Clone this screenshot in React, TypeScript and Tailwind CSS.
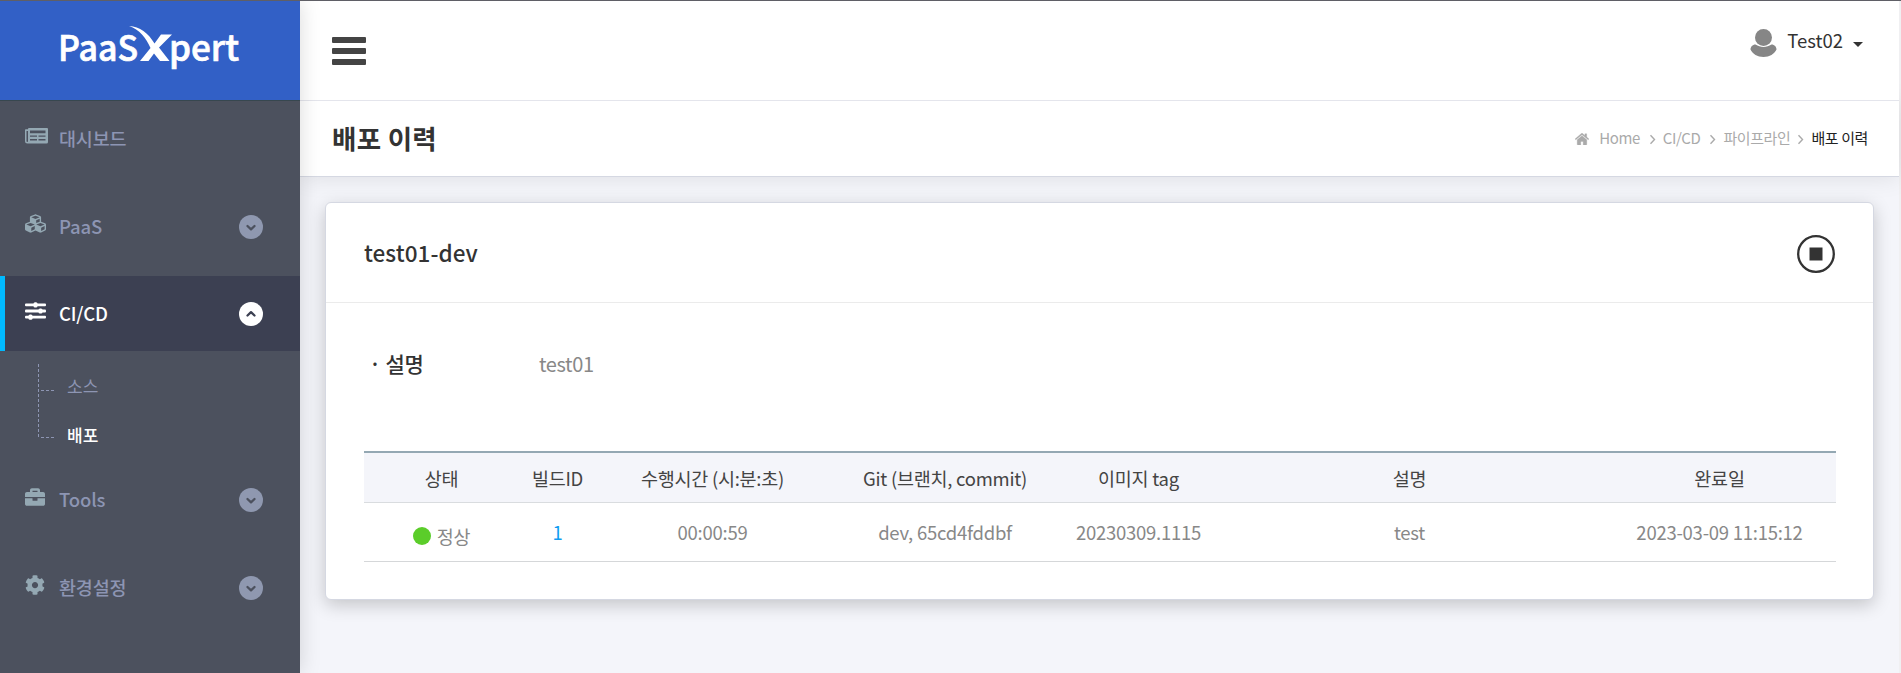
import React from "react";
import { FaCubes, FaBriefcase, FaCog } from "react-icons/fa";

function CircleArrow({ up = false }: { up?: boolean }) {
  return (
    <svg width="24" height="24" viewBox="0 0 24 24" className={up ? "text-white" : "text-[#8f98b0]"}>
      <circle cx="12" cy="12" r="12" fill="currentColor" />
      <path
        d={up ? "M8.500 13.500 12 10.200l3.500 3.300" : "M8.500 11l3.500 3.300 3.500-3.300"}
        fill="none"
        stroke={up ? "#3c4052" : "#4c515e"}
        strokeWidth="2.3"
        strokeLinecap="round"
        strokeLinejoin="round"
      />
    </svg>
  );
}

function NewsIcon() {
  return (
    <svg width="23" height="16" viewBox="0 0 23 16">
      <path
        fill="currentColor"
        fillRule="evenodd"
        d="M4 0h18q1 0 1 1v13q0 1.500-1.500 1.500H2.500Q0 15.500 0 13V2q0-.8.8-.8H3V1q0-1 1-1zM1.500 3v10q0 1 .8 1t.7-1V3zM5 2.500v2.800h15.500V2.500zM5 7.400v1.300h7V7.400zM13.500 7.400v1.300h7V7.400zM5 11v1.400h7V11zM13.500 11v1.400h7V11z"
      />
    </svg>
  );
}

function SlidersIcon() {
  return (
    <svg width="22" height="18" viewBox="0 0 22 18" fill="currentColor">
      <rect x="0" y="1.500" width="21" height="2.800" rx="1" />
      <rect x="0" y="7.600" width="21" height="2.800" rx="1" />
      <rect x="0" y="13.700" width="21" height="2.800" rx="1" />
      <rect x="8.500" y="0.300" width="4" height="5.200" rx="1.500" />
      <rect x="13.500" y="6.400" width="4" height="5.200" rx="1.500" />
      <rect x="3.500" y="12.500" width="4" height="5.200" rx="1.500" />
    </svg>
  );
}

function Separator({ className }: { className: string }) {
  return (
    <svg width="12" height="12" viewBox="0 0 12 12" className={className}>
      <path d="M3.500 2.300 7.500 6.500l-4 4.200" fill="none" stroke="#aaa" strokeWidth="1.400" />
    </svg>
  );
}

function MenuItem({
  icon,
  label,
  arrow,
  active = false,
}: {
  icon: React.ReactNode;
  label: string;
  arrow?: "up" | "down";
  active?: boolean;
}) {
  return (
    <div
      className={
        active
          ? "flex h-[75px] items-center border-l-5 border-[#00baff] bg-[#3c4052] pr-[37px] pl-5 text-white"
          : "flex h-[75px] items-center pr-[37px] pl-[25px] text-[#8d95b3]"
      }
    >
      <span className={active ? "mb-[6px] w-[34px] text-white" : "mb-[6px] w-[34px] text-[#94a8b3]"}>{icon}</span>
      <span className="mb-[2px] flex-1 text-[18.5px] leading-6 font-medium tracking-[-0.15px]">{label}</span>
      {arrow && <CircleArrow up={arrow === "up"} />}
    </div>
  );
}

function Logo() {
  return (
    <svg width="300" height="99" viewBox="0 0 300 99" fill="#fff">
      <g fontFamily="Noto Sans CJK KR" fontSize="35.500" fontWeight="500" stroke="#fff" strokeWidth="0.700">
        <text x="58" y="59.700" textLength="80" lengthAdjust="spacingAndGlyphs">
          PaaS
        </text>
        <text x="169" y="59.700" textLength="70" lengthAdjust="spacingAndGlyphs">
          pert
        </text>
      </g>
      <path d="M129 25c11 1 19 6.500 25.500 17.500l6.500-9h11L159 46.500l10.500 13.500h-9.500l-6-7.500-5.500 7.500h-8.500l10.500-13C146 37 139.500 28.500 129 25z" />
    </svg>
  );
}

const columns = [
  { head: "상태", width: "w-[155px]" },
  { head: "빌드ID", width: "w-[77px]" },
  { head: "수행시간 (시:분:초)", width: "w-[233px]" },
  { head: "Git (브랜치, commit)", width: "w-[232px]" },
  { head: "이미지 tag", width: "w-[155px]" },
  { head: "설명", width: "w-[387px]" },
  { head: "완료일", width: "w-[233px]" },
];

export default function App() {
  return (
    <div className="flex h-[673px] flex-col overflow-hidden border-t border-[#5f5f66] bg-[#f4f5fa] font-['Noto_Sans_CJK_KR',sans-serif] text-[#333]">
      <div className="flex min-h-0 flex-1">
        <aside className="z-20 flex w-[300px] shrink-0 flex-col bg-[#4c515e] shadow-[0_0_20px_rgba(0,0,0,0.15)]">
          <div className="h-[100px] shrink-0 border-b border-[#37474f] bg-[#3260c6]">
            <Logo />
          </div>
          <nav className="flex flex-col">
            <MenuItem icon={<NewsIcon />} label="대시보드" />
            <div className="mt-[13px]" />
            <MenuItem icon={<FaCubes size={21} />} label="PaaS" arrow="down" />
            <div className="mt-3" />
            <MenuItem icon={<SlidersIcon />} label="CI/CD" arrow="up" active />
            <div className="flex h-[111px] pt-[13px] pl-[38px]">
              <svg width="17" height="75" viewBox="0 0 17 75" fill="none" stroke="#8d95b3" strokeDasharray="3 2">
                <path d="M.5 0v74M3 26.500h14M3 73.500h14" />
              </svg>
              <ul className="flex flex-col pl-3 text-[17px] leading-[22px]">
                <li className="mt-[11px] text-[#8d95b3]">소스</li>
                <li className="mt-[27px] font-medium text-white">배포</li>
              </ul>
            </div>
            <MenuItem icon={<FaBriefcase size={20} />} label="Tools" arrow="down" />
            <div className="mt-[13px]" />
            <MenuItem icon={<FaCog size={20} />} label="환경설정" arrow="down" />
          </nav>
        </aside>

        <main className="flex min-w-0 flex-1 flex-col border-r-2 border-[#f0f0f2]">
          <header className="z-10 flex h-[100px] shrink-0 items-start justify-between border-b border-[#e4e5ec] bg-white pr-[36px] pl-8">
            <button className="mt-9 flex flex-col gap-[5px]" aria-label="menu">
              <span className="h-[6px] w-[34px] rounded-[1px] bg-[#444]" />
              <span className="h-[6px] w-[34px] rounded-[1px] bg-[#444]" />
              <span className="h-[6px] w-[34px] rounded-[1px] bg-[#444]" />
            </button>
            <div className="mt-7 flex">
              <svg width="27" height="28" viewBox="0 0 27 28" fill="#868686">
                <circle cx="13.500" cy="8.500" r="8.500" />
                <path d="M5.500 15.500c5 3.300 11 3.300 16 0 3 0 5 2.500 5 5-2 4.500-7 7.500-13 7.500S2.500 25 .5 20.500c0-2.500 2-5 5-5z" />
              </svg>
              <span className="-mt-px ml-[10px] text-[18.5px] leading-6">Test02</span>
              <svg width="10" height="5" viewBox="0 0 10 5" fill="#333" className="mt-[13px] ml-[10px]">
                <path d="M0 0h10L5 5z" />
              </svg>
            </div>
          </header>
          <div className="flex h-[76px] shrink-0 items-center justify-between border-b border-[#d5d8e2] bg-white pr-[31px] pl-8 shadow-[0_0_25px_rgba(0,0,0,0.1)]">
            <h1 className="mb-[2px] text-[26.5px] leading-8 font-bold tracking-[0.3px]">배포 이력</h1>
            <ol className="flex items-center text-[15px] tracking-[-0.4px] text-[#aaa]">
              <li className="flex items-center">
                <svg width="14" height="12" viewBox="0 0 14 12" fill="#aaa" className="mr-[10px]">
                  <path d="M7 2.700 2.200 6.700V11.300q0 .7.600.7H5.800V8.500H8.200V12h3q.6 0 .6-.7V6.700zM7 0 0 5.900l.8.9L7 1.700l6.200 5.100.8-.9-2.300-1.900V.8H9.900v1.600z" stroke="#aaa" strokeWidth=".3" />
                </svg>
                Home
              </li>
              <li className="flex items-center"><Separator className="mr-[4px] ml-[7px]" />CI/CD</li>
              <li className="flex items-center"><Separator className="mr-[4px] ml-[7px]" />파이프라인</li>
              <li className="flex items-center"><Separator className="mr-[4px] ml-[5px]" /><span className="text-[#222]">배포 이력</span></li>
            </ol>
          </div>

          <section className="mt-[25px] mr-[25px] ml-[25px] h-[398px] rounded-md border border-[#d5d8e2] bg-white shadow-[0_5px_18px_rgba(0,0,0,0.2)]">
            <div className="flex h-[100px] items-center justify-between border-b border-[#ebebeb] pr-[38px] pl-[38px]">
              <h2 className="mb-[2px] text-[22.5px] leading-8 font-medium tracking-[0.05px]">test01-dev</h2>
              <svg width="38" height="38" viewBox="0 0 38 38" className="mt-[3px]">
                <circle cx="19" cy="19" r="17.800" fill="none" stroke="#333" strokeWidth="2.300" />
                <path d="M12.500 12.500h13v13h-13z" fill="#333" />
              </svg>
            </div>
            <dl className="flex h-[147px] pt-[47px] pl-[43px] leading-7">
              <dt className="-mt-px w-[170px] text-[21px] font-medium tracking-[-0.2px]">· 설명</dt>
              <dd className="text-[20px] tracking-[-0.4px] text-[#888]">test01</dd>
            </dl>
            <table className="mt-px ml-[38px] w-[1472px] table-fixed text-center text-[18.5px] leading-6 tracking-[-0.25px]">
              <thead>
                <tr className="h-[50px] border-t-2 border-b border-t-[#94a8b3] border-b-[#d9dcdf] bg-[#f4f5fa]">
                  {columns.map((c) => (
                    <th key={c.head} className={`${c.width} p-0 pt-[2px] font-normal text-[#444]`}>{c.head}</th>
                  ))}
                </tr>
              </thead>
              <tbody>
                <tr className="h-[59px] border-b border-[#d5d7d9] text-[#888]">
                  <td>
                    <span className="flex items-center justify-center gap-[6px] pt-[9px]">
                      <span className="h-[18px] w-[18px] rounded-full bg-[#5bcd2a]" />
                      <span>정상</span>
                    </span>
                  </td>
                  <td className="pt-px text-[#109cf1]">1</td>
                  <td className="pt-px">00:00:59</td>
                  <td className="pt-px">dev, 65cd4fddbf</td>
                  <td className="pt-px">20230309.1115</td>
                  <td className="pt-px">test</td>
                  <td className="pt-px">2023-03-09 11:15:12</td>
                </tr>
              </tbody>
            </table>
          </section>
        </main>
      </div>
    </div>
  );
}
